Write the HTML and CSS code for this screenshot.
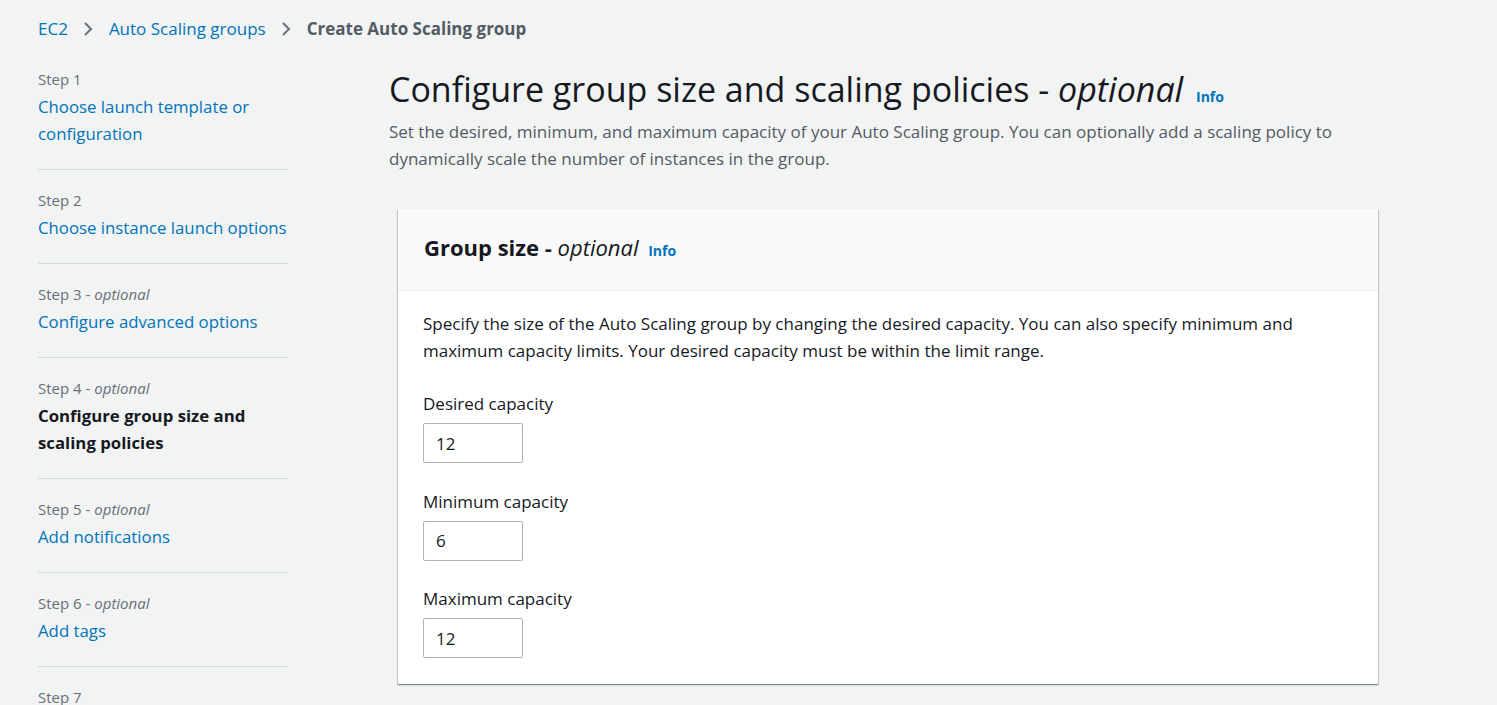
FILE: index.html
```html
<!DOCTYPE html>
<html lang="en">
<head>
<meta charset="utf-8">
<title>Create Auto Scaling group</title>
<link rel="stylesheet" href="styles.css">
</head>
<body>
<div class="page">
  <nav class="breadcrumb">
    <a class="crumb-link" href="#">EC2</a>
    <svg class="chev" width="16" height="16" viewBox="0 0 16 16"><path d="M5 2l6 6-6 6" fill="none" stroke="#687078" stroke-width="2"/></svg>
    <a class="crumb-link" href="#">Auto Scaling groups</a>
    <svg class="chev" width="16" height="16" viewBox="0 0 16 16"><path d="M5 2l6 6-6 6" fill="none" stroke="#687078" stroke-width="2"/></svg>
    <span class="crumb-current">Create Auto Scaling group</span>
  </nav>
  <div class="layout">
    <ul class="steps">
      <li class="step"><div class="step-label">Step 1</div><a class="step-link" href="#">Choose launch template or configuration</a></li>
      <li class="step"><div class="step-label">Step 2</div><a class="step-link" href="#">Choose instance launch options</a></li>
      <li class="step"><div class="step-label">Step 3 - <i>optional</i></div><a class="step-link" href="#">Configure advanced options</a></li>
      <li class="step"><div class="step-label">Step 4 - <i>optional</i></div><span class="step-current">Configure group size and scaling policies</span></li>
      <li class="step"><div class="step-label">Step 5 - <i>optional</i></div><a class="step-link" href="#">Add notifications</a></li>
      <li class="step"><div class="step-label">Step 6 - <i>optional</i></div><a class="step-link" href="#">Add tags</a></li>
      <li class="step"><div class="step-label">Step 7</div><a class="step-link" href="#">Review</a></li>
    </ul>
    <main class="main">
      <h1 class="title">Configure group size and scaling policies - <i>optional</i> <a class="info" href="#">Info</a></h1>
      <p class="desc">Set the desired, minimum, and maximum capacity of your Auto Scaling group. You can optionally add a scaling policy to dynamically scale the number of instances in the group.</p>
      <section class="panel">
        <header class="panel-header">
          <h2 class="panel-title">Group size - <i>optional</i> <a class="info" href="#">Info</a></h2>
        </header>
        <div class="panel-body">
          <p class="panel-text">Specify the size of the Auto Scaling group by changing the desired capacity. You can also specify minimum and maximum capacity limits. Your desired capacity must be within the limit range.</p>
          <div class="field">
            <label class="field-label">Desired capacity</label>
            <input class="field-input" type="text" value="12">
          </div>
          <div class="field">
            <label class="field-label">Minimum capacity</label>
            <input class="field-input" type="text" value="6">
          </div>
          <div class="field">
            <label class="field-label">Maximum capacity</label>
            <input class="field-input" type="text" value="12">
          </div>
        </div>
      </section>
    </main>
  </div>
</div>
</body>
</html>
```
FILE: styles.css
```css
html, body {
  margin: 0;
  padding: 0;
  background: #f2f3f3;
  font-family: "Open Sans", "Noto Sans", sans-serif;
  color: #16191f;
}
a { text-decoration: none; }
.page {
  padding: 18px 0 0 38px;
  height: 705px;
  overflow: hidden;
  box-sizing: border-box;
}
.breadcrumb {
  display: flex;
  align-items: center;
  font-size: 17px;
  line-height: 22px;
  height: 22px;
}
.crumb-link { color: #0073bb; }
.chev { margin: 0 13px 0 12px; }
.crumb-current { color: #545b64; font-weight: 700; }
.layout {
  display: grid;
  grid-template-columns: 250px 1fr;
  column-gap: 101px;
  margin-top: 29px;
}
.steps {
  list-style: none;
  margin: 0;
  padding: 0;
}
.step {
  padding: 20px 0 22px;
  border-top: 1px solid #d5dbdb;
  display: flex;
  flex-direction: column;
  gap: 4px;
}
.step:first-child { border-top: 0; padding-top: 0; }
.step-label {
  font-size: 15px;
  line-height: 20px;
  color: #687078;
}
.step-link, .step-current {
  font-size: 16.8px;
  line-height: 27px;
  color: #0073bb;
}
.step-current { color: #16191f; font-weight: 700; }
.main { padding-right: 119px; }
.title {
  margin: 0;
  font-size: 34px;
  line-height: 40px;
  font-weight: 400;
  color: #16191f;
}
.info {
  font-size: 14px;
  font-weight: 700;
  font-style: normal;
  color: #0073bb;
  margin-left: 4px;
  vertical-align: baseline;
}
.desc {
  margin: 1px 0 0;
  font-size: 17px;
  line-height: 27px;
  color: #545b64;
}
.panel {
  margin: 37px 0 0 9px;
  width: 980px;
  background: #fff;
  box-shadow: 0 1px 1px 0 rgba(0,28,36,.3), 1px 1px 1px 0 rgba(0,28,36,.15), -1px 1px 1px 0 rgba(0,28,36,.15);
}
.panel-header {
  background: #fafafa;
  border-bottom: 1px solid #eaeded;
  padding: 24px 26px 25px;
}
.panel-title {
  margin: 0;
  font-size: 22px;
  line-height: 28px;
  font-weight: 700;
}
.panel-title i { font-weight: 400; }
.panel-body {
  padding: 19px 26px 26px 25px;
  display: flex;
  flex-direction: column;
  gap: 24.5px;
}
.panel-text {
  margin: 0 0 1.5px;
  font-size: 17px;
  line-height: 27px;
  color: #16191f;
  max-width: 900px;
}
.field {
  display: flex;
  flex-direction: column;
  gap: 6px;
}
.field-label {
  font-size: 17px;
  line-height: 27px;
}
.field-input {
  width: 100px;
  height: 40px;
  box-sizing: border-box;
  border: 1px solid #aab7b8;
  border-radius: 2px;
  padding: 0 12px;
  font: 17px "Open Sans", "Noto Sans", sans-serif;
  color: #16191f;
  background: #fff;
}
```
